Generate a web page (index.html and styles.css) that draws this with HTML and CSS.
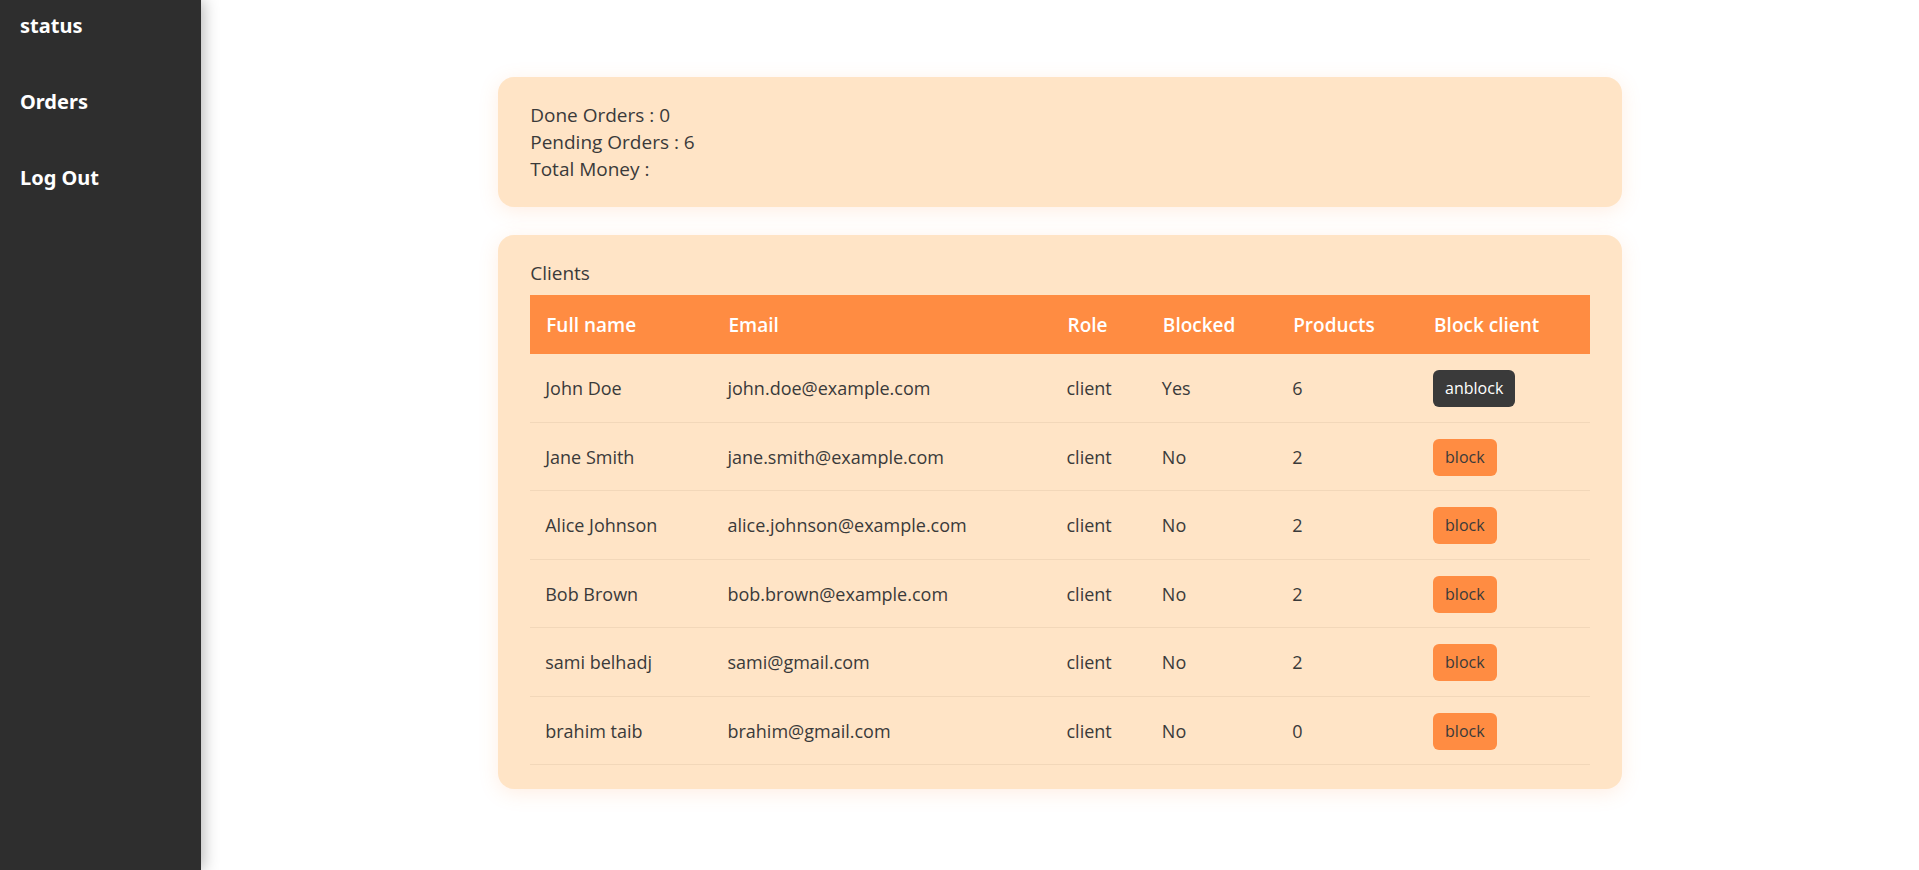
FILE: index.html
```html
<!DOCTYPE html>
<html lang="en">
<head>
<meta charset="utf-8">
<meta name="viewport" content="width=device-width, initial-scale=1">
<title>Status</title>
<link rel="stylesheet" href="styles.css">
</head>
<body>
<div class="layout">
  <nav class="sidebar">
    <a class="sidebar-link" href="#status">status</a>
    <a class="sidebar-link" href="#orders">Orders</a>
    <a class="sidebar-link" href="#logout">Log Out</a>
  </nav>
  <main class="content">
    <section class="card">
      <p class="line">Done Orders : 0</p>
      <p class="line">Pending Orders : 6</p>
      <p class="line">Total Money :</p>
    </section>
    <section class="card">
      <p class="line title" id="clients">Clients</p>
      <table class="clients" aria-labelledby="clients">
        <colgroup>
          <col class="col-name"><col class="col-email"><col class="col-role"><col class="col-blocked"><col class="col-products"><col>
        </colgroup>
        <thead>
          <tr><th>Full name</th><th>Email</th><th>Role</th><th>Blocked</th><th>Products</th><th>Block client</th></tr>
        </thead>
        <tbody>
          <tr><td>John Doe</td><td>john.doe@example.com</td><td>client</td><td>Yes</td><td>6</td><td><button class="btn btn-dark" type="button">anblock</button></td></tr>
          <tr><td>Jane Smith</td><td>jane.smith@example.com</td><td>client</td><td>No</td><td>2</td><td><button class="btn" type="button">block</button></td></tr>
          <tr><td>Alice Johnson</td><td>alice.johnson@example.com</td><td>client</td><td>No</td><td>2</td><td><button class="btn" type="button">block</button></td></tr>
          <tr><td>Bob Brown</td><td>bob.brown@example.com</td><td>client</td><td>No</td><td>2</td><td><button class="btn" type="button">block</button></td></tr>
          <tr><td>sami belhadj</td><td>sami@gmail.com</td><td>client</td><td>No</td><td>2</td><td><button class="btn" type="button">block</button></td></tr>
          <tr><td>brahim taib</td><td>brahim@gmail.com</td><td>client</td><td>No</td><td>0</td><td><button class="btn" type="button">block</button></td></tr>
        </tbody>
      </table>
    </section>
  </main>
</div>
</body>
</html>
```
FILE: styles.css
```css
* { box-sizing: border-box; }
body {
  margin: 0;
  background: #fff;
  color: #3a3a3a;
  font: 18px/27px "Segoe UI", "Open Sans", "Noto Sans", sans-serif;
}
.layout { display: flex; min-height: 100vh; }
.sidebar {
  flex: none;
  width: 201px;
  background: #2e2e2e;
  box-shadow: 2px 0 15px rgba(0, 0, 0, 0.3);
  display: flex;
  flex-direction: column;
  gap: 49px;
  padding: 12px 20px;
}
.sidebar-link {
  color: #fff;
  font-family: "Noto Sans", sans-serif;
  font-size: 20px;
  font-weight: 700;
  text-decoration: none;
}
.content {
  flex: 1;
  display: flex;
  flex-direction: column;
  align-items: center;
  gap: 28px;
  padding: 77px 0;
}
.card {
  width: 65.4%;
  padding: 25px 32px 24px;
  border-radius: 16px;
  background: #ffe4c6;
  box-shadow: 0 4px 20px rgba(255, 140, 66, 0.15);
}
.line { margin: 0; font-size: 19px; }
.title { margin-bottom: 8px; }
.clients { width: 100%; table-layout: fixed; border-collapse: separate; border-spacing: 0; }
.col-name { width: 17.2%; }
.col-email { width: 32%; }
.col-role { width: 9%; }
.col-blocked { width: 12.3%; }
.col-products { width: 13.3%; }
th {
  padding: 17px 16px 15px;
  background: #ff8c42;
  color: #fff;
  font-size: 19px;
  font-weight: 600;
  text-align: left;
}
td {
  height: 68px;
  padding: 1px 15px 0;
  border-bottom: 1px solid #f2d7b9;
}
tbody tr:nth-child(odd) td { height: 69px; }
.btn {
  display: block;
  padding: 5px 12px;
  border: 0;
  border-radius: 6px;
  background: #ff8c42;
  color: #3a3a3a;
  font: inherit;
  font-size: 16px;
  cursor: pointer;
}
.btn-dark { background: #3a3a3a; color: #fff; }
```
